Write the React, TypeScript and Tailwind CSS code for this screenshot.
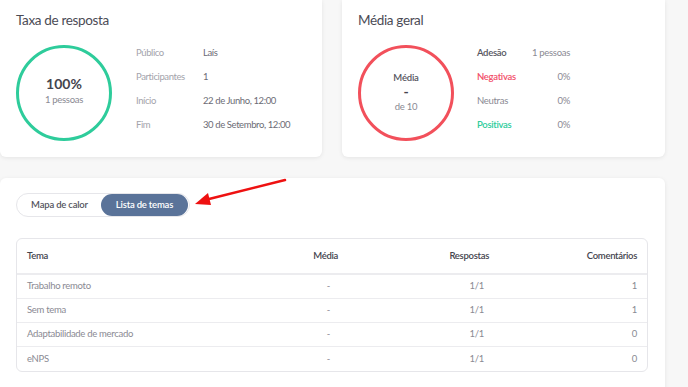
import React from "react";

const font = { fontFamily: '"Lato", "Open Sans", sans-serif' };

function InfoRow({ label, value }: { label: string; value: string }) {
  return (
    <div className="flex h-[24px] items-center">
      <span className="w-[67px] text-[#a3a3ab]">{label}</span>
      <span className="text-[#6c6c75]">{value}</span>
    </div>
  );
}

const rows = [
  { tema: "Trabalho remoto", media: "-", resp: "1/1", com: "1" },
  { tema: "Sem tema", media: "-", resp: "1/1", com: "1" },
  { tema: "Adaptabilidade de mercado", media: "-", resp: "1/1", com: "0" },
  { tema: "eNPS", media: "-", resp: "1/1", com: "0" },
];

export default function App() {
  return (
    <div className="relative w-[688px] h-[387px] overflow-hidden bg-[#f7f7f7]" style={font}>
      <div className="flex flex-col gap-[21px] w-[665px]">
        <div className="flex gap-[20px]">
          {/* Card 1 */}
          <div className="w-[322px] h-[157px] bg-white rounded-b-md shadow-[0_1px_4px_rgba(0,0,0,0.08)] px-[16px] pt-[12px]">
            <div className="text-[13.5px] tracking-[-0.35px] text-[#4b4b55] leading-[17px]">Taxa de resposta</div>
            <div className="flex mt-[16px]">
              <div className="w-[96px] h-[96px] rounded-full border-[3px] border-[#2ecc9b] flex flex-col items-center justify-center">
                <div className="text-[14px] font-bold text-[#44444e] leading-[16px] mt-[-4px]">100%</div>
                <div className="text-[9.5px] tracking-[-0.3px] text-[#8a8a93] leading-[14px] mt-[1px]">1 pessoas</div>
              </div>
              <div className="ml-[24px] -mt-[4px] text-[9.5px] tracking-[-0.4px] flex flex-col">
                <InfoRow label="Público" value="Laís" />
                <InfoRow label="Participantes" value="1" />
                <InfoRow label="Início" value="22 de Junho, 12:00" />
                <InfoRow label="Fim" value="30 de Setembro, 12:00" />
              </div>
            </div>
          </div>
          {/* Card 2 */}
          <div className="w-[323px] h-[157px] bg-white rounded-b-md shadow-[0_1px_4px_rgba(0,0,0,0.08)] px-[16px] pt-[12px]">
            <div className="text-[13.5px] tracking-[-0.35px] text-[#4b4b55] leading-[17px]">Média geral</div>
            <div className="flex mt-[16px]">
              <div className="w-[96px] h-[96px] rounded-full border-[3px] border-[#f2505b] flex flex-col items-center justify-center">
                <div className="text-[9.5px] tracking-[-0.2px] font-semibold text-[#55555e] leading-[14px] mt-[-2px]">Média</div>
                <div className="text-[14px] font-bold text-[#44444e] leading-[14px]">-</div>
                <div className="text-[9.5px] tracking-[-0.3px] text-[#8a8a93] leading-[14px] mt-[1px]">de 10</div>
              </div>
              <div className="ml-[23px] -mt-[4px] text-[9.5px] tracking-[-0.3px] flex flex-col w-[93px]">
                <div className="flex h-[24px] items-center justify-between">
                  <span className="font-semibold text-[#55555e]">Adesão</span>
                  <span className="text-[#8a8a93]">1 pessoas</span>
                </div>
                <div className="flex h-[24px] items-center justify-between">
                  <span className="font-semibold text-[#f2506a]">Negativas</span>
                  <span className="text-[#8a8a93]">0%</span>
                </div>
                <div className="flex h-[24px] items-center justify-between">
                  <span className="text-[#8a8a93]">Neutras</span>
                  <span className="text-[#8a8a93]">0%</span>
                </div>
                <div className="flex h-[24px] items-center justify-between">
                  <span className="font-semibold text-[#2ecc9b]">Positivas</span>
                  <span className="text-[#8a8a93]">0%</span>
                </div>
              </div>
            </div>
          </div>
        </div>
        {/* Card 3 */}
        <div className="w-[665px] h-[230px] bg-white rounded-t-md shadow-[0_1px_4px_rgba(0,0,0,0.08)] px-[16px] pt-[15px]">
          <div className="flex w-[174px] h-[24px] rounded-full border border-[#e6e6ea] items-center p-[1px] text-[9.5px] tracking-[-0.2px] font-semibold">
            <div className="flex-1 text-center text-[#55555e]">Mapa de calor</div>
            <div className="w-[87px] h-[22px] rounded-full bg-[#5a7399] text-white flex items-center justify-center">Lista de temas</div>
          </div>
          <div className="mt-[21px] w-[632px] rounded-md border border-[#e6e6ea] text-[9.5px] tracking-[-0.3px] overflow-hidden">
            <div className="flex h-[36px] items-center px-[10px] font-semibold text-[#44444e] border-b-2 border-[#ececef]">
              <div className="flex-1">Tema</div>
              <div className="w-[80px] text-right">Média</div>
              <div className="w-[151px] text-right">Respostas</div>
              <div className="w-[148px] text-right">Comentários</div>
            </div>
            {rows.map((r, i) => (
              <div key={i} className={"flex h-[24px] items-center px-[10px] text-[#8a8a93] " + (i < rows.length - 1 ? "border-b border-[#ececef]" : "")}>
                <div className="flex-1">{r.tema}</div>
                <div className="w-[80px] text-right pr-[8px]">{r.media}</div>
                <div className="w-[151px] text-right pr-[5px]">{r.resp}</div>
                <div className="w-[148px] text-right">{r.com}</div>
              </div>
            ))}
          </div>
        </div>
      </div>
      {/* red annotation arrow */}
      <svg className="absolute left-[190px] top-[174px]" width="100" height="36" viewBox="0 0 100 36">
        <line x1="95" y1="6" x2="15" y2="26" stroke="#ee1111" strokeWidth="2.5" strokeLinecap="round" />
        <polygon points="5,30 18,19 21,31" fill="#ee1111" />
      </svg>
    </div>
  );
}
